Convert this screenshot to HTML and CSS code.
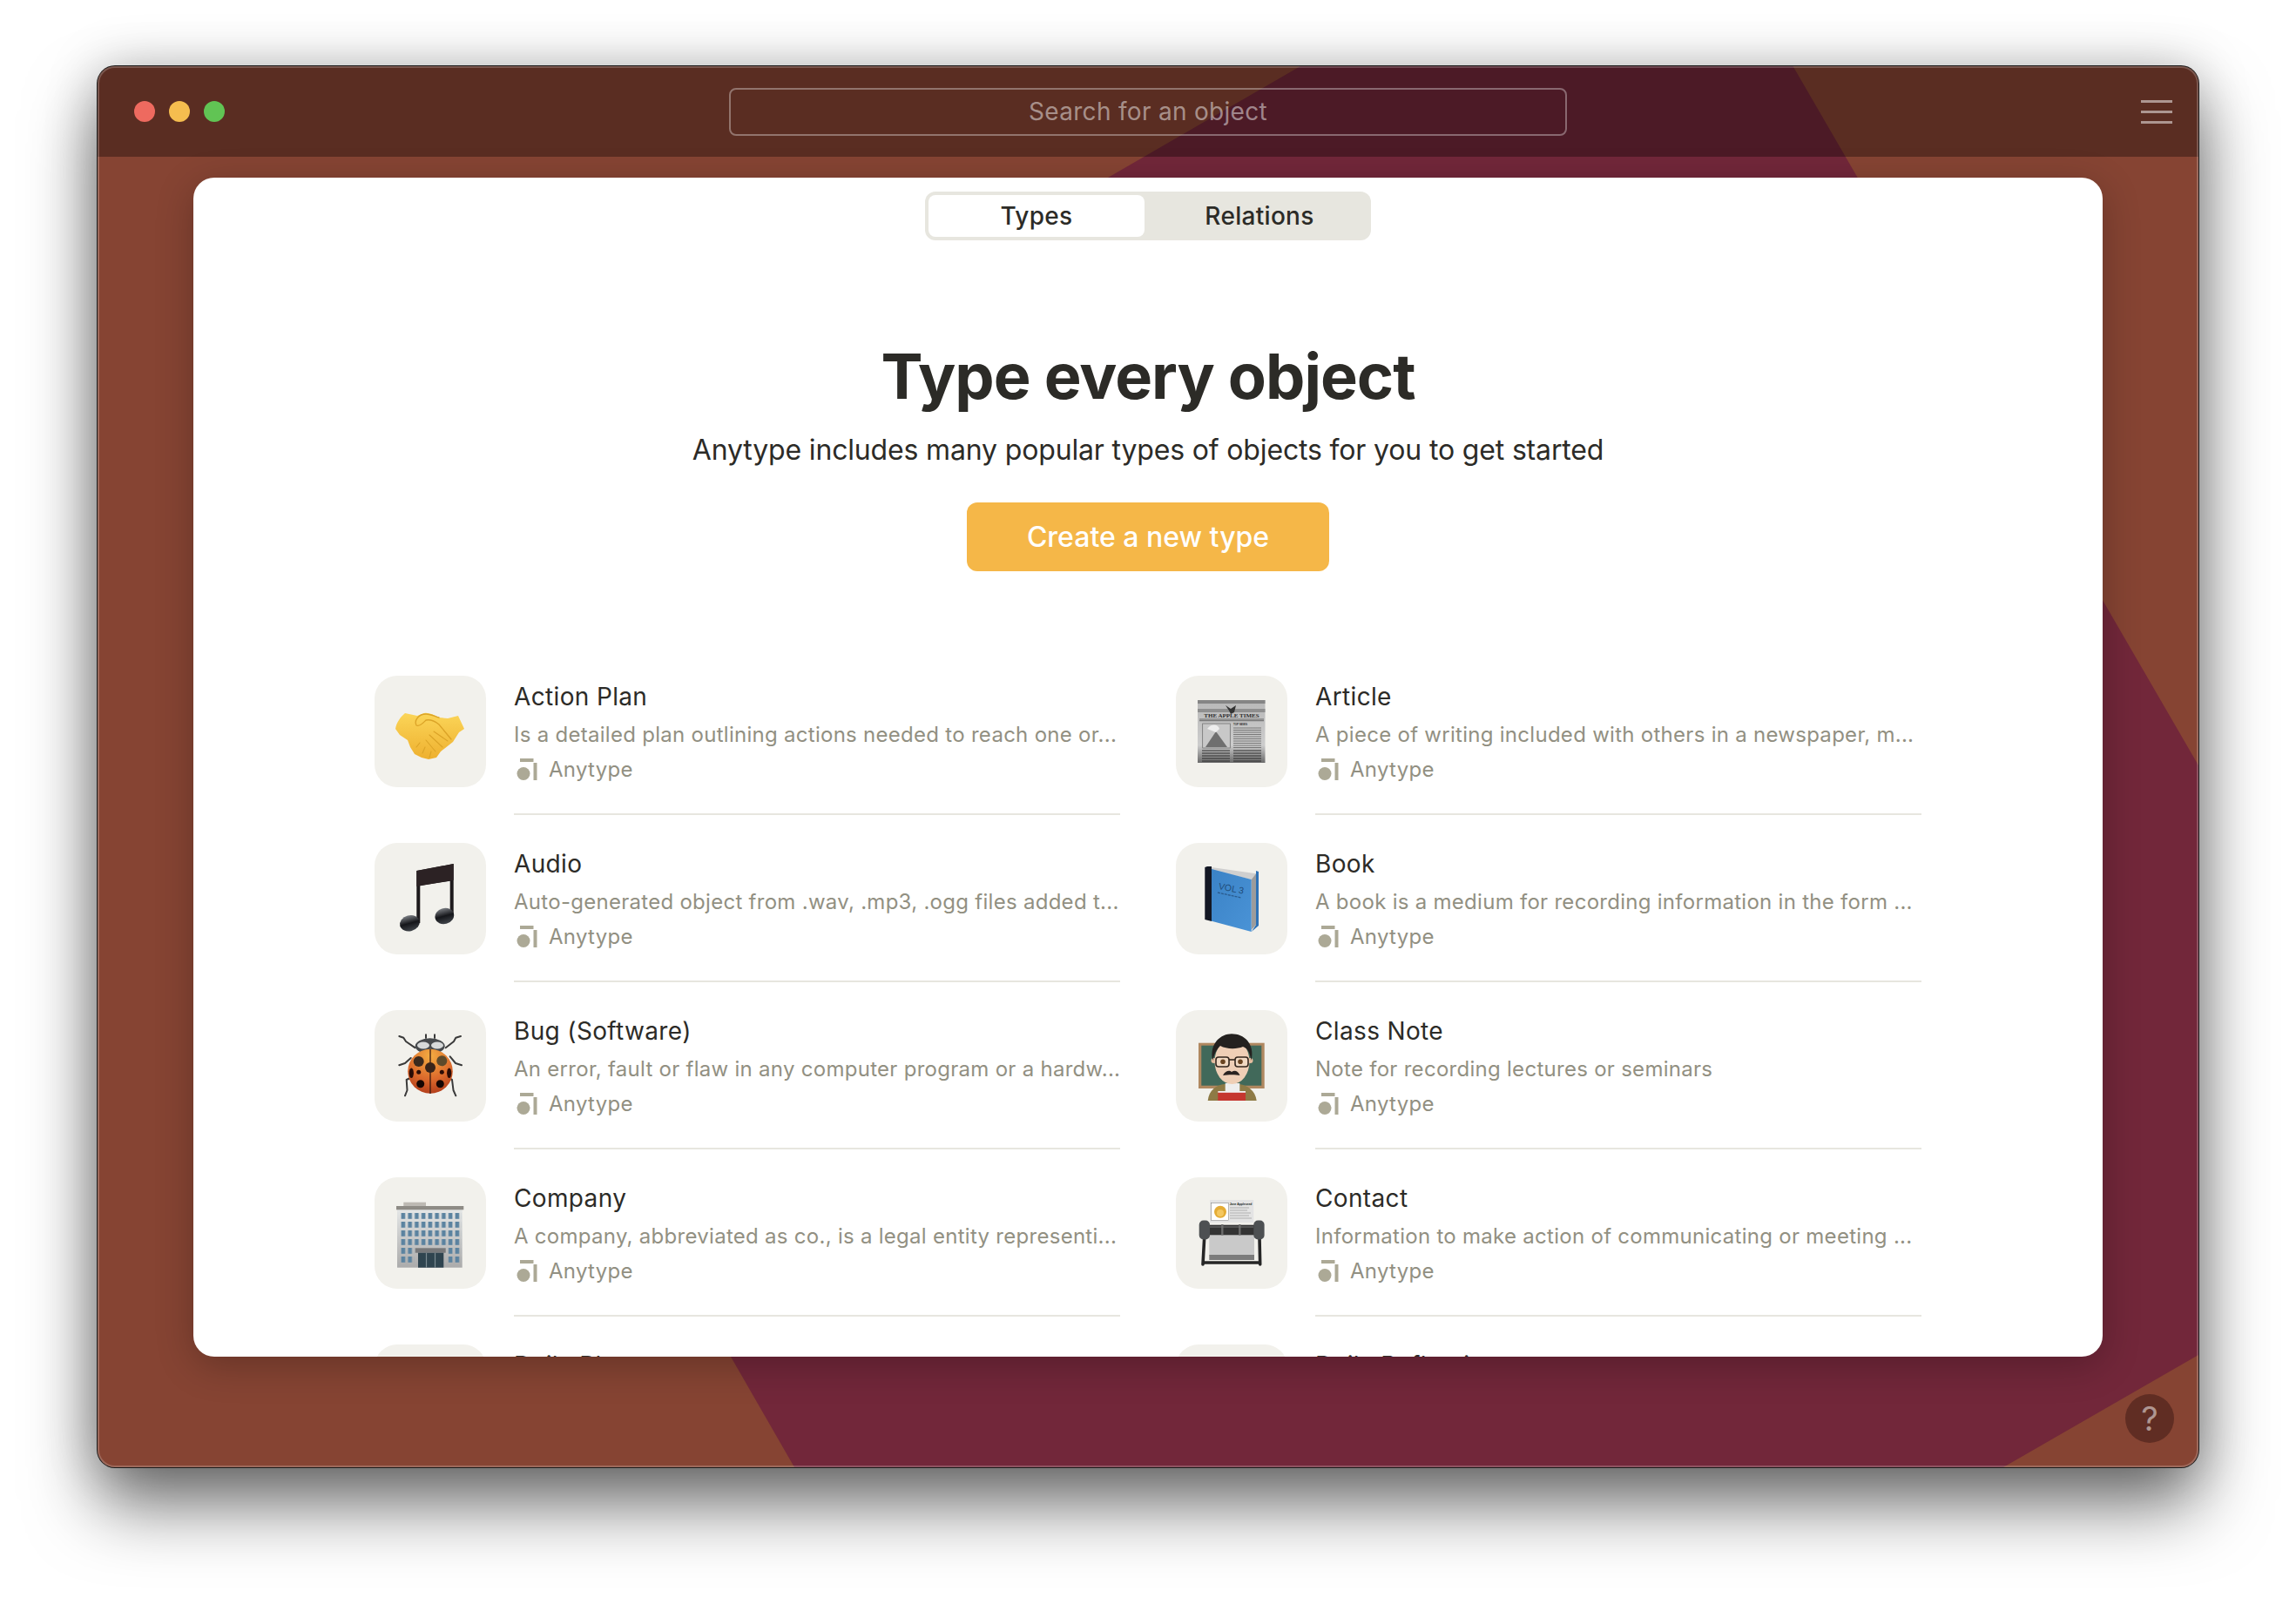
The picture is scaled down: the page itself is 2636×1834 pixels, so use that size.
FILE: index.html
```html
<!DOCTYPE html>
<html lang="en">
<head>
<meta charset="utf-8">
<title>Anytype library</title>
<link rel="stylesheet" href="styles.css">
</head>
<body>
<div class="window">
  <div class="wedge"></div>
  <header class="titlebar">
    <div class="lights"><span class="light red"></span><span class="light yellow"></span><span class="light green"></span></div>
    <div class="search">Search for an object</div>
    <div class="burger"><span></span><span></span><span></span></div>
  </header>
  <main class="stage">
    <section class="card">
      <nav class="tabs"><div class="tab active">Types</div><div class="tab">Relations</div></nav>
      <h1 class="headline">Type every object</h1>
      <p class="lead">Anytype includes many popular types of objects for you to get started</p>
      <button class="cta">Create a new type</button>
      <div class="grid">

        <article class="item">
          <div class="pic"><svg viewBox="0 0 80 80" class="emoji"><defs><linearGradient id="hs" x1="0" y1="0" x2="0" y2="1"><stop offset="0" stop-color="#fbd558"/><stop offset="1" stop-color="#eeb02f"/></linearGradient></defs><path d="M0 37 C1 30 6 23 11 19 L25 22 L33 19 C38 18 44 21 50 24 L60 25 L72 22 L79 37 L73 41 L66 52 L52 63 L47 70 L38 72 L30 70 L22 66 L17 58 L14 50 L5 44 Z" fill="url(#hs)"/><path d="M24 33 C21 27 27 20 35 20 C41 20 46 23 50 24 M24 33 C28 35 32 30 35 27 C40 26 45 28 50 32 L64 49" fill="none" stroke="#dba327" stroke-width="1.300" stroke-linecap="round"/><path d="M44 40 L60 51 M39 44 L54 58 M35 50 L46 63 M24 58 L28 53 M31 65 L34 58 M39 70 L41 63" stroke="#dba327" stroke-width="1.100" fill="none" stroke-linecap="round"/></svg></div>
          <div class="body"><h2 class="name">Action Plan</h2><p class="desc">Is a detailed plan outlining actions needed to reach one or...</p><div class="meta"><svg class="logo" viewBox="0 0 24 26"><circle cx="8" cy="17.500" r="7.500"/><path d="M4 0H19.500V4H4Z"/><path d="M19.500 5H23.500V25H19.500Z"/></svg><span>Anytype</span></div></div>
        </article>

        <article class="item">
          <div class="pic"><svg viewBox="0 0 80 80" class="emoji"><defs><linearGradient id="np" x1="0" y1="0" x2="0" y2="1"><stop offset="0" stop-color="#b8b8b8"/><stop offset=".72" stop-color="#cdcdcd"/><stop offset="1" stop-color="#6a6a6a"/></linearGradient></defs><rect x="1" y="4" width="77.500" height="72" fill="url(#np)"/><rect x="1" y="4" width="77.500" height="4" fill="#858585"/><rect x="1" y="14" width="77.500" height="4" fill="#8f8f8f"/><path d="M33 10 L39 14 L45 10 L43 18 L39 20 L37 16 Z" fill="#333"/><text x="40" y="24" text-anchor="middle" class="paper">THE APPLE TIMES</text><path d="M3 26H77M3 27.700H77" stroke="#444" stroke-width=".7"/><rect x="6.700" y="31" width="31.600" height="28" fill="#c8c8c8" stroke="#666" stroke-width=".7"/><path d="M10 58 L22 40 L35 58 Z" fill="#6f6f6f"/><path d="M12 37 C17 30 25 32 26 37 L22 41 Z" fill="#eee"/><text x="42" y="33" class="news">TOP NEWS</text><path d="M42 36H74M42 38.500H74M42 41H74M42 43.500H74M42 46H74M42 48.500H74M42 51H74M42 53.500H74M42 56H74M42 58.500H74" stroke="#777" stroke-width="1"/><path d="M6 62H38M6 65H38M6 68H38M6 71H38M6 74H38M42 62H74M42 65H74M42 68H74M42 71H74M42 74H74" stroke="#2c2c2c" stroke-width="1.200"/></svg></div>
          <div class="body"><h2 class="name">Article</h2><p class="desc">A piece of writing included with others in a newspaper, m...</p><div class="meta"><svg class="logo" viewBox="0 0 24 26"><circle cx="8" cy="17.500" r="7.500"/><path d="M4 0H19.500V4H4Z"/><path d="M19.500 5H23.500V25H19.500Z"/></svg><span>Anytype</span></div></div>
        </article>

        <article class="item">
          <div class="pic"><svg viewBox="0 0 80 80" class="emoji"><defs><linearGradient id="nh" x1="0" y1="0" x2="0" y2="1"><stop offset="0" stop-color="#7a7d82"/><stop offset=".5" stop-color="#15161a"/><stop offset="1" stop-color="#40444a"/></linearGradient></defs><path d="M24.300 8 L66.700 0 V60 H62.700 V19.700 L28.300 25 V68 H24.300 Z" fill="#1d1a1c"/><path d="M24.300 8 L66.700 0 V18.700 L24.300 26 Z" fill="#2c2224"/><ellipse cx="16.400" cy="68.300" rx="11.500" ry="9" transform="rotate(-15 16.400 68.300)" fill="url(#nh)"/><ellipse cx="56.300" cy="60" rx="11" ry="9" transform="rotate(-15 56.300 60)" fill="url(#nh)"/></svg></div>
          <div class="body"><h2 class="name">Audio</h2><p class="desc">Auto-generated object from .wav, .mp3, .ogg files added t...</p><div class="meta"><svg class="logo" viewBox="0 0 24 26"><circle cx="8" cy="17.500" r="7.500"/><path d="M4 0H19.500V4H4Z"/><path d="M19.500 5H23.500V25H19.500Z"/></svg><span>Anytype</span></div></div>
        </article>

        <article class="item">
          <div class="pic"><svg viewBox="0 0 80 80" class="emoji"><defs><linearGradient id="bk" x1="0" y1="0" x2="1" y2="1"><stop offset="0" stop-color="#3a82c6"/><stop offset="1" stop-color="#4a93d6"/></linearGradient></defs><path d="M9.300 4 L12 3 H17 V66 L9.300 64 Z" fill="#141824"/><path d="M68 8 L71 9 V71 L62.700 78 L68 70 Z" fill="#2f72b6"/><path d="M17 4 L68 11.300 L62.700 18 L17 7 Z" fill="#cfcfcf"/><path d="M62.700 18 L68 11.300 V70 L62.700 76 Z" fill="#9c9c9c"/><path d="M17 6 L62.700 18 V78 L17 65.700 Z" fill="url(#bk)"/><text x="24.500" y="29" class="vol" transform="rotate(11 24.500 29)">VOL 3</text><path d="M24 33 L51 39" stroke="#2a5b8e" stroke-width="1.300" stroke-dasharray="3 1"/></svg></div>
          <div class="body"><h2 class="name">Book</h2><p class="desc">A book is a medium for recording information in the form ...</p><div class="meta"><svg class="logo" viewBox="0 0 24 26"><circle cx="8" cy="17.500" r="7.500"/><path d="M4 0H19.500V4H4Z"/><path d="M19.500 5H23.500V25H19.500Z"/></svg><span>Anytype</span></div></div>
        </article>

        <article class="item">
          <div class="pic"><svg viewBox="0 0 80 80" class="emoji"><defs><radialGradient id="lb" cx=".5" cy=".15" r=".95"><stop offset="0" stop-color="#f3ad42"/><stop offset=".55" stop-color="#dc6a2c"/><stop offset="1" stop-color="#a83216"/></radialGradient></defs><g stroke="#3a3a3a" stroke-width="2" fill="none" stroke-linecap="round" stroke-linejoin="round"><path d="M4.300 6 L9.300 7.700 L12 12 L22.700 19.300 M75 6 L69.300 7.700 L67 12 L57.700 19.300 M4.300 39.300 L11 37 L17.700 31 M76 39.300 L69 37 L62.700 29.300 M11 74.300 L13.500 68 L12.700 56 L17 54 M69.300 74.300 L66.500 68 L65 56 L61 54 M35 8 V4.300 M45 8 V4.300"/></g><ellipse cx="39.700" cy="17.300" rx="17" ry="9" fill="#46494c"/><ellipse cx="32" cy="16.500" rx="7" ry="4" fill="#d7d9d9"/><ellipse cx="48" cy="16.500" rx="7" ry="4" fill="#d7d9d9"/><ellipse cx="40" cy="46.300" rx="25.800" ry="25.500" fill="url(#lb)"/><path d="M40 21V72" stroke="#3a1a10" stroke-width="1.300"/><circle cx="26.700" cy="35" r="6" fill="#3b2a1e"/><circle cx="53.300" cy="34.300" r="6" fill="#5d4a2b"/><circle cx="40" cy="42" r="6" fill="#38241a"/><circle cx="26.700" cy="47.300" r="2.500" fill="#2b0c06"/><circle cx="53.300" cy="47.300" r="2.500" fill="#2b0c06"/><ellipse cx="18.300" cy="48.300" rx="2.600" ry="5.800" fill="#2b0c06"/><ellipse cx="61.700" cy="48.300" rx="2.600" ry="5.800" fill="#2b0c06"/><circle cx="28.700" cy="60.700" r="4.500" fill="#160603"/><circle cx="51.300" cy="60.700" r="4.500" fill="#160603"/></svg></div>
          <div class="body"><h2 class="name">Bug (Software)</h2><p class="desc">An error, fault or flaw in any computer program or a hardw...</p><div class="meta"><svg class="logo" viewBox="0 0 24 26"><circle cx="8" cy="17.500" r="7.500"/><path d="M4 0H19.500V4H4Z"/><path d="M19.500 5H23.500V25H19.500Z"/></svg><span>Anytype</span></div></div>
        </article>

        <article class="item">
          <div class="pic"><svg viewBox="0 0 80 80" class="emoji"><rect x="2" y="13.700" width="75.700" height="52.300" fill="#b08860"/><rect x="5.300" y="16.700" width="69" height="46" fill="#41695a"/><path d="M12.700 80 C14 68 22 62 32 61 H48 C58 62 67 68 68.700 80 Z" fill="#8e7a45"/><rect x="32.700" y="60" width="16.600" height="10" fill="#eeeeee"/><rect x="24.300" y="69" width="31.700" height="11" fill="#c5362f"/><rect x="24.300" y="69" width="31.700" height="1.800" fill="#f0f0f0"/><circle cx="19.500" cy="34" r="3" fill="#e5bd9f"/><circle cx="61.500" cy="34" r="3" fill="#e5bd9f"/><ellipse cx="40.500" cy="35" rx="20" ry="26" fill="#efcfb6"/><path d="M18.300 34 C14 14 28 3.300 40 3.300 C54 3.300 67 14 62.700 34 C61 26 59 20 53 18 C46 21 34 21 27 17 C23 21 20 26 18.300 34Z" fill="#24211f"/><g fill="#f6ead9" fill-opacity=".35" stroke="#33261d" stroke-width="1.600"><rect x="22" y="30" width="15" height="11" rx="3"/><rect x="44" y="30" width="15" height="11" rx="3"/></g><path d="M37 33 H44" stroke="#33261d" stroke-width="1.600"/><circle cx="30" cy="35.300" r="2.800" fill="#6b4521"/><circle cx="50" cy="35.300" r="2.800" fill="#6b4521"/><path d="M30 51 C33 45 38 45 40 47 C43 45 47 45 49.500 51 C45 50 36 50 30 51Z" fill="#2a2320"/></svg></div>
          <div class="body"><h2 class="name">Class Note</h2><p class="desc">Note for recording lectures or seminars</p><div class="meta"><svg class="logo" viewBox="0 0 24 26"><circle cx="8" cy="17.500" r="7.500"/><path d="M4 0H19.500V4H4Z"/><path d="M19.500 5H23.500V25H19.500Z"/></svg><span>Anytype</span></div></div>
        </article>

        <article class="item">
          <div class="pic"><svg viewBox="0 0 80 80" class="emoji"><defs><pattern id="win" width="7.750" height="10" patternUnits="userSpaceOnUse" x="6" y="17"><rect x=".6" y="0" width="4.600" height="6.800" fill="#5b83a0"/></pattern><linearGradient id="bd" x1="0" y1="0" x2="0" y2="1"><stop offset="0" stop-color="#e4e6e6"/><stop offset="1" stop-color="#ababab"/></linearGradient></defs><rect x="9.300" y="4.700" width="25.700" height="5" fill="#bdb9b3"/><rect x="2" y="13" width="74.700" height="66.700" fill="url(#bd)"/><rect x="6" y="17" width="69.750" height="40" fill="url(#win)"/><rect x="1" y="9" width="77.300" height="4.300" fill="#8e8b85"/><rect x="6" y="57" width="15.500" height="20" fill="url(#win)"/><rect x="60.250" y="57" width="15.500" height="20" fill="url(#win)"/><rect x="22.700" y="57.300" width="35" height="5.400" fill="#77787a"/><rect x="26" y="62.700" width="29.300" height="17" fill="#2f444f"/><path d="M35.500 62.700V79.700M45.500 62.700V79.700" stroke="#7b8a92" stroke-width="1.200"/></svg></div>
          <div class="body"><h2 class="name">Company</h2><p class="desc">A company, abbreviated as co., is a legal entity representi...</p><div class="meta"><svg class="logo" viewBox="0 0 24 26"><circle cx="8" cy="17.500" r="7.500"/><path d="M4 0H19.500V4H4Z"/><path d="M19.500 5H23.500V25H19.500Z"/></svg><span>Anytype</span></div></div>
        </article>

        <article class="item">
          <div class="pic"><svg viewBox="0 0 80 80" class="emoji"><rect x="15" y="2" width="50.300" height="26" fill="#e4e4e4"/><rect x="16.700" y="5.700" width="20" height="20" fill="#fff" stroke="#777" stroke-width=".5"/><circle cx="27" cy="15.700" r="7" fill="#e4ac35"/><circle cx="27" cy="17" r="4" fill="#f4c75f"/><text x="37.700" y="8" class="jane">Jane Appleseed</text><path d="M38 11H60M38 14H58M38 17H62M38 20H60M38 23H63" stroke="#999" stroke-width=".7"/><rect x="14.300" y="42" width="51.700" height="24" fill="#c9c9c9"/><rect x="14.300" y="65" width="51.700" height="6" fill="#7c7c7c"/><path d="M8.700 45 L7 76 M72 45 L72.700 76" stroke="#262626" stroke-width="3.600" stroke-linecap="round" fill="none"/><path d="M7 74 H73" stroke="#262626" stroke-width="3.600"/><rect x="8" y="30.700" width="64" height="11.600" fill="#333"/><rect x="2.700" y="25.500" width="12.300" height="22" rx="5" fill="#4d5052"/><rect x="65.300" y="25.500" width="12.300" height="22" rx="5" fill="#4d5052"/><path d="M29.300 30V42.500M49.300 30V42.500" stroke="#6b6b6b" stroke-width="2.400"/><path d="M15 33H65" stroke="#777" stroke-width="1.200"/></svg></div>
          <div class="body"><h2 class="name">Contact</h2><p class="desc">Information to make action of communicating or meeting ...</p><div class="meta"><svg class="logo" viewBox="0 0 24 26"><circle cx="8" cy="17.500" r="7.500"/><path d="M4 0H19.500V4H4Z"/><path d="M19.500 5H23.500V25H19.500Z"/></svg><span>Anytype</span></div></div>
        </article>

        <article class="item">
          <div class="pic"></div>
          <div class="body"><h2 class="name">Daily Plan</h2></div>
        </article>

        <article class="item">
          <div class="pic"></div>
          <div class="body"><h2 class="name">Daily Reflection</h2></div>
        </article>

      </div>
    </section>
    <div class="help">?</div>
  </main>
</div>
</body>
</html>
```
FILE: styles.css
```css
* { box-sizing: border-box; }
html, body { margin: 0; height: 100%; background: #fff; }
body { padding: 76px 112px 148px 112px; font-family: Inter, "Noto Sans", sans-serif; overflow: hidden; }

.window {
  position: relative;
  width: 2412px;
  height: 1609px;
  border-radius: 20px;
  background: #864433;
  display: flex;
  flex-direction: column;
  box-shadow: 0 0 0 1px #1c1c1c, 0 44px 80px rgba(0,0,0,.55), 0 0 60px rgba(0,0,0,.22);
}
.window::after {
  content: "";
  position: absolute;
  inset: 0;
  border-radius: 20px;
  box-shadow: inset 0 0 0 2px rgba(255,255,255,.2);
  pointer-events: none;
  z-index: 5;
}
.wedge {
  position: absolute;
  inset: 0;
  border-radius: 20px;
  background: #72273a;
  clip-path: polygon(1381px 0, 1946.500px 0, 2412px 803px, 2412px 1480px, 2188px 1609px, 800px 1609px, 727px 1482px, 1160px 128px);
}
.titlebar {
  position: relative;
  height: 104px;
  flex: none;
  display: grid;
  grid-template-columns: 1fr 962px 1fr;
  align-items: center;
  background: rgba(0,0,0,.33);
  border-radius: 20px 20px 0 0;
}
.lights { display: flex; gap: 16px; padding-left: 42px; }
.light { width: 24px; height: 24px; border-radius: 50%; }
.red { background: #ee6a5f; }
.yellow { background: #f5bd4f; }
.green { background: #61c454; }
.search {
  height: 55px;
  border: 2px solid rgba(255,255,255,.34);
  border-radius: 8px;
  display: flex;
  align-items: center;
  justify-content: center;
  font-size: 28px;
  letter-spacing: .3px;
  color: rgba(255,255,255,.48);
}
.burger { justify-self: end; margin-right: 30px; width: 36px; display: flex; flex-direction: column; gap: 9px; }
.burger span { height: 3px; background: rgba(255,255,255,.5); }

.stage { position: relative; flex: 1; padding: 24px 110px 127px 110px; min-height: 0; }
.card {
  height: 100%;
  background: #fff;
  border-radius: 24px;
  overflow: hidden;
  box-shadow: 0 10px 44px rgba(0,0,0,.24);
  display: flex;
  flex-direction: column;
  align-items: center;
  padding-top: 16px;
}
.tabs {
  flex: none;
  width: 512px;
  height: 56px;
  padding: 4px 0 4px 4px;
  border-radius: 12px;
  background: #e7e6df;
  display: grid;
  grid-template-columns: 248px 1fr;
  column-gap: 4px;
}
.tab {
  display: flex;
  align-items: center;
  justify-content: center;
  font-size: 28px;
  font-weight: 500;
  letter-spacing: .3px;
  color: #2c2b27;
  border-radius: 8px;
}
.active { background: #fff; }
.headline { flex: none; margin: 114px 0 0; font-size: 72px; line-height: 84px; font-weight: 700; color: #2c2b27; letter-spacing: -1px; }
.lead { flex: none; margin: 21px 0 0; font-size: 32px; line-height: 44px; color: #2c2b27; letter-spacing: -.16px; }
.cta {
  flex: none;
  margin-top: 38px;
  width: 416px;
  height: 79px;
  border: 0;
  border-radius: 12px;
  background: #f5b748;
  color: #fff;
  font: 500 32px Inter, sans-serif;
}
.grid {
  flex: none;
  width: 1776px;
  margin-top: 120px;
  display: grid;
  grid-template-columns: 856px 856px;
  column-gap: 64px;
}
.item { height: 192px; display: flex; gap: 32px; }
.pic { flex: none; width: 128px; height: 128px; border-radius: 26px; background: #f2f1ec; display: flex; align-items: center; justify-content: center; }
.emoji { width: 80px; height: 80px; display: block; }
.body { flex: 1; height: 160px; border-bottom: 2px solid #e7e6df; min-width: 0; }
.name { margin: 8px 0 0; font-size: 28px; line-height: 32px; font-weight: 400; color: #2c2b27; letter-spacing: .35px; white-space: nowrap; }
.desc { margin: 11px 0 0; font-size: 24px; line-height: 34px; color: #929082; white-space: nowrap; letter-spacing: .28px; }
.meta { margin-top: 6px; display: flex; align-items: center; gap: 13px; padding-left: 3px; font-size: 24px; line-height: 34px; color: #929082; letter-spacing: .28px; }
.logo { width: 24px; height: 26px; fill: #aca996; flex: none; }
.help {
  position: absolute;
  right: 28px;
  bottom: 28px;
  width: 56px;
  height: 56px;
  border-radius: 50%;
  background: #602d23;
  color: rgba(255,255,255,.5);
  font-size: 38px;
  display: flex;
  align-items: center;
  justify-content: center;
}
.paper { font: 700 7px "Liberation Serif", serif; fill: #2e2e2e; }
.news { font: 700 3px "Liberation Sans", sans-serif; fill: #333; }
.vol { font: 400 10.500px "Liberation Sans", sans-serif; fill: #1f4d7a; }
.jane { font: 700 3.400px "Liberation Sans", sans-serif; fill: #222; }
```
